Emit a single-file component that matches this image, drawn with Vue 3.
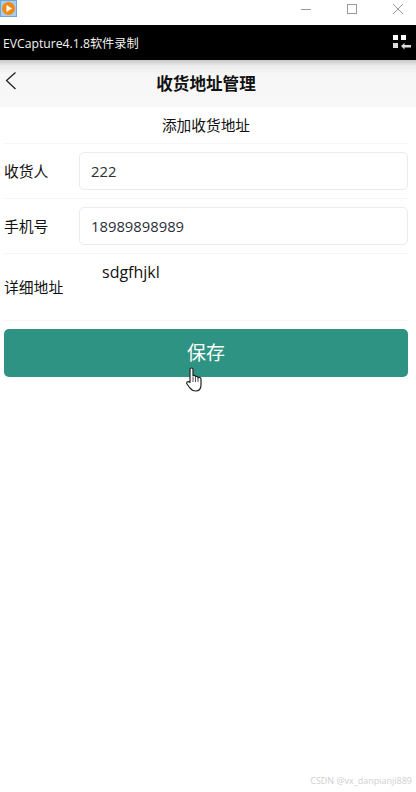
<template>
  <div class="screen">
    <div class="titlebar">
      <svg class="app-icon" width="17" height="17" viewBox="0 0 17 17">
        <rect x="0.5" y="0.5" width="16" height="16" fill="#a9cdec" stroke="#6fa6d6" />
        <circle cx="8.5" cy="8.5" r="6.5" fill="#f08a12" />
        <path d="M6.500 5L12 8.500L6.500 12Z" fill="#fff" />
      </svg>
      <div class="win-btns">
        <svg width="12" height="12" viewBox="0 0 12 12"><path d="M1 6.500H11" stroke="#999" /></svg>
        <svg width="12" height="12" viewBox="0 0 12 12"><rect x="1.5" y="1.5" width="9" height="9" fill="none" stroke="#999" /></svg>
        <svg width="12" height="12" viewBox="0 0 12 12"><path d="M1 1L11 11M11 1L1 11" stroke="#999" /></svg>
      </div>
    </div>
    <div class="capture-bar">
      <span class="capture-name">EVCapture4.1.8软件录制</span>
      <svg width="18" height="16" viewBox="0 0 18 16">
        <rect x="0" y="0" width="5" height="5" fill="#fff" />
        <rect x="8" y="0" width="5" height="5" fill="#fff" />
        <rect x="0" y="8" width="5" height="5" fill="#ddd" />
        <path d="M8 11L11.500 8V10H18V12.500H11.500V14.500Z" fill="#ddd" />
      </svg>
    </div>
    <header class="nav">
      <svg class="back" width="12" height="20" viewBox="0 0 12 20">
        <path d="M10.500 1.500L1.500 9.500L10.500 18" fill="none" stroke="#222" stroke-width="1.300" />
      </svg>
      <span class="nav-title">收货地址管理</span>
    </header>
    <div class="subtitle">添加收货地址</div>
    <div class="form">
      <div v-for="f in fields" :key="f.label" class="row">
        <label class="label">{{ f.label }}</label>
        <div class="input">{{ f.value }}</div>
      </div>
      <div class="row row-area">
        <label class="label">详细地址</label>
        <div class="area">sdgfhjkl</div>
      </div>
    </div>
    <button class="save">保存</button>
    <svg class="cursor" width="18" height="26" viewBox="0 0 18 26">
      <path d="M4 15V3.500C4 1.500 7 1.500 7 3.500V10C7 9 9.500 9 9.500 10.500V11C9.500 10 12 10 12 11.500V12C12 11 15 11 15 13V19C15 23 13 25 9.500 25C6 25 5 23.500 3.500 21.500L1 18C0 16 2.500 14.500 4 16.500Z" fill="#fff" stroke="#222" stroke-width="1.200" stroke-linejoin="round" />
      <path d="M7 11V16M9.500 11.500V16M12 12V16" stroke="#222" stroke-width="0.800" fill="none" />
    </svg>
    <div class="watermark">CSDN @vx_danpianji889</div>
  </div>
</template>

<script setup>
const fields = [
  { label: '收货人', value: '222' },
  { label: '手机号', value: '18989898989' },
]
</script>

<style>
html, body {
  margin: 0;
  background: #fff;
}
</style>

<style scoped>
.screen {
  position: relative;
  width: 416px;
  height: 792px;
  overflow: hidden;
  background: #fff;
  font-family: "Open Sans", "Noto Sans CJK SC", sans-serif;
  color: #111;
}

.titlebar {
  height: 25px;
  display: flex;
  align-items: flex-start;
  justify-content: space-between;
  box-sizing: border-box;
  padding: 0 12px 0 0;
}

.app-icon {
  display: block;
}

.win-btns {
  display: flex;
  gap: 34px;
  padding-top: 3px;
}

.win-btns svg {
  display: block;
}

.capture-bar {
  height: 35px;
  background: #000;
  display: flex;
  align-items: center;
  justify-content: space-between;
  padding: 0 5px 0 3px;
}

.capture-name {
  color: #f2f2f2;
  font-size: 12.2px;
}

.nav {
  position: relative;
  height: 47px;
  box-sizing: border-box;
  padding-right: 4px;
  display: flex;
  align-items: center;
  justify-content: center;
  background: linear-gradient(#c8c8c8 0, #ececec 6px, #f6f6f6 14px, #f8f8f8 100%);
}

.back {
  position: absolute;
  left: 5px;
  top: 11px;
}

.nav-title {
  font-size: 16.6px;
  font-weight: 700;
  color: #111;
  margin-bottom: 1px;
}

.subtitle {
  height: 36px;
  box-sizing: border-box;
  padding: 0 4px 2px 0;
  display: flex;
  align-items: center;
  justify-content: center;
  font-size: 14.7px;
}

.form {
  margin: 0 8px 0 4px;
  border-top: 1px solid #f5f5f5;
}

.row {
  height: 54px;
  display: flex;
  align-items: center;
  border-bottom: 1px solid #f5f5f5;
}

.row-area {
  height: 66px;
  align-items: flex-start;
}

.label {
  width: 75px;
  flex-shrink: 0;
  font-size: 14.8px;
  padding-bottom: 2px;
}

.row-area .label {
  margin-top: 22px;
}

.input {
  flex: 1;
  height: 38px;
  box-sizing: border-box;
  border: 1px solid #ebebeb;
  border-radius: 5px;
  padding: 0 11px;
  display: flex;
  align-items: center;
  font-size: 14.8px;
  color: #2b2f38;
}

.area {
  margin: 7px 0 0 23px;
  font-size: 16px;
  line-height: 22px;
}

.save {
  display: block;
  width: 404px;
  height: 48px;
  margin: 8px 4px 0;
  border: 0;
  padding: 0 0 2px;
  border-radius: 5px;
  background: #2e9382;
  color: #fff;
  font-family: inherit;
  font-size: 19px;
}

.cursor {
  position: absolute;
  left: 186px;
  top: 366px;
}

.watermark {
  position: absolute;
  right: 4px;
  bottom: 5px;
  font-size: 9px;
  color: #d0d0d0;
}
</style>
